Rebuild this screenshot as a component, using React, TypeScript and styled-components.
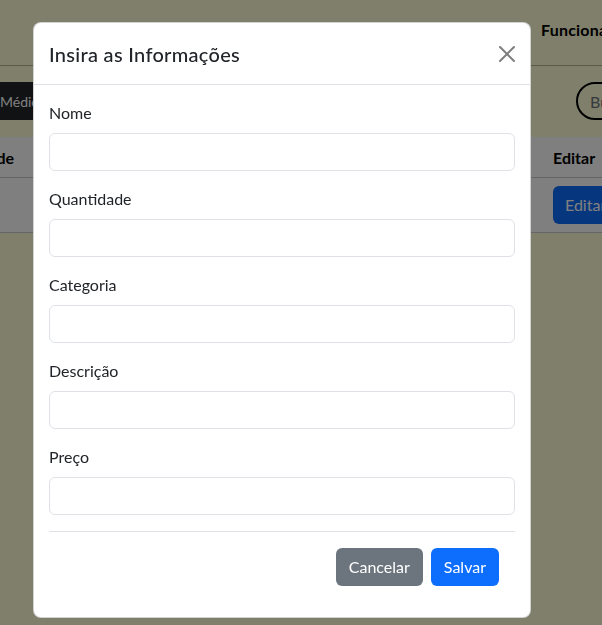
import styled, { createGlobalStyle } from "styled-components";

const GlobalStyle = createGlobalStyle`
  * { box-sizing: border-box; }
  html, body {
    margin: 0;
    padding: 0;
    overflow: hidden;
  }
  body {
    font-family: "Segoe UI", Lato, "Liberation Sans", sans-serif;
    font-size: 16px;
    line-height: 1.5;
    color: #212529;
    background: #ffffd6;
  }
`;

const Page = styled.div`
  width: 602px;
  height: 625px;
  background: #ffffd6;
  overflow: hidden;
`;

const Navbar = styled.nav`
  height: 66px;
  border-bottom: 1px solid #b4b496;
  display: flex;
  align-items: flex-start;
  padding: 18px 0 0 541px;
  white-space: nowrap;
`;

const NavLink = styled.span`
  font-weight: 700;
  font-size: 16px;
  letter-spacing: 0.2px;
  color: #000;
`;

const Toolbar = styled.div`
  height: 71px;
  display: grid;
  grid-template-columns: 576px auto;
  align-items: start;
  padding-top: 16px;
  white-space: nowrap;
`;

const DarkButton = styled.button`
  justify-self: start;
  margin-left: -12px;
  height: 38px;
  padding: 6px 12px;
  border: none;
  border-radius: 0;
  background: #212529;
  color: #fff;
  font: inherit;
  font-size: 14px;
`;

const PillButton = styled.button`
  height: 38px;
  padding: 6px 12px;
  border: 2px solid #000;
  border-radius: 20px;
  background: transparent;
  color: #6c757d;
  font: inherit;
`;

const Table = styled.div`
  background: #fff;
  display: grid;
  grid-template-columns: 14px 1fr 49px;
`;

const Cell = styled.div<{ $head?: boolean; $clipLeft?: boolean }>`
  display: flex;
  align-items: center;
  justify-content: ${(p) => (p.$clipLeft ? "flex-end" : "flex-start")};
  overflow: hidden;
  white-space: nowrap;
  height: ${(p) => (p.$head ? "41px" : "55px")};
  padding-top: ${(p) => (p.$head ? "2px" : "0")};
  border-bottom: 1px solid #c8cbcf;
  font-weight: ${(p) => (p.$head ? 700 : 400)};
  color: ${(p) => (p.$head ? "#000" : "#212529")};
`;

const EditButton = styled.button`
  flex-shrink: 0;
  height: 38px;
  padding: 6px 12px;
  border: none;
  border-radius: 6px;
  background: #0d6efd;
  color: #fff;
  font: inherit;
`;

const Backdrop = styled.div`
  position: fixed;
  inset: 0;
  background: rgba(0, 0, 0, 0.5);
  padding: 22px 0 0 33px;
`;

const Dialog = styled.div`
  width: 498px;
  background: #fff;
  border: 1px solid rgba(0, 0, 0, 0.175);
  border-radius: 8px;
`;

const Header = styled.div`
  display: flex;
  align-items: center;
  justify-content: space-between;
  padding: 16px 15px 15px;
  border-bottom: 1px solid #dee2e6;
`;

const Title = styled.h5`
  margin: 0;
  font-size: 20px;
  font-weight: 500;
  line-height: 30px;
  letter-spacing: 0.3px;
`;

const CloseButton = styled.button`
  width: 24px;
  height: 24px;
  padding: 0;
  margin-right: -4px;
  border: none;
  background: transparent;
  opacity: 0.5;
  display: flex;
  align-items: center;
  justify-content: center;
`;

const Body = styled.div`
  padding: 16px 15px;
`;

const Field = styled.div`
  margin-bottom: 16px;
`;

const Label = styled.label`
  display: block;
  margin-bottom: 8px;
`;

const Input = styled.input`
  display: block;
  width: 100%;
  height: 38px;
  padding: 6px 12px;
  border: 1px solid #dee2e6;
  border-radius: 6px;
  font: inherit;
  color: #212529;
  background: #fff;
`;

const Footer = styled.div`
  display: flex;
  justify-content: flex-end;
  gap: 8px;
  padding: 16px 16px 15px;
  border-top: 1px solid #dee2e6;
`;

const Button = styled.button<{ $variant: "primary" | "secondary" }>`
  height: 38px;
  padding: 6px 13px;
  border: none;
  border-radius: 6px;
  font: inherit;
  color: #fff;
  background: ${(p) => (p.$variant === "primary" ? "#0d6efd" : "#6c757d")};
`;

const fields = ["Nome", "Quantidade", "Categoria", "Descrição", "Preço"];

export default function App() {
  return (
    <>
      <GlobalStyle />
      <Page>
        <Navbar>
          <NavLink>Funcionários</NavLink>
        </Navbar>
        <Toolbar>
          <DarkButton>Médicos</DarkButton>
          <PillButton>Buscar</PillButton>
        </Toolbar>
        <Table>
          <Cell $head $clipLeft>
            Quantidade
          </Cell>
          <Cell $head />
          <Cell $head>Editar</Cell>
          <Cell />
          <Cell />
          <Cell>
            <EditButton>Editar</EditButton>
          </Cell>
        </Table>
      </Page>
      <Backdrop>
        <Dialog>
          <Header>
            <Title>Insira as Informações</Title>
            <CloseButton aria-label="Close">
              <svg width="16" height="16" viewBox="0 0 16 16">
                <path
                  fill="#000"
                  d="M.293.293a1 1 0 0 1 1.414 0L8 6.586 14.293.293a1 1 0 1 1 1.414 1.414L9.414 8l6.293 6.293a1 1 0 0 1-1.414 1.414L8 9.414l-6.293 6.293a1 1 0 0 1-1.414-1.414L6.586 8 .293 1.707a1 1 0 0 1 0-1.414z"
                />
              </svg>
            </CloseButton>
          </Header>
          <Body>
            {fields.map((f) => (
              <Field key={f}>
                <Label>{f}</Label>
                <Input type="text" />
              </Field>
            ))}
            <Footer>
              <Button $variant="secondary">Cancelar</Button>
              <Button $variant="primary">Salvar</Button>
            </Footer>
          </Body>
        </Dialog>
      </Backdrop>
    </>
  );
}
